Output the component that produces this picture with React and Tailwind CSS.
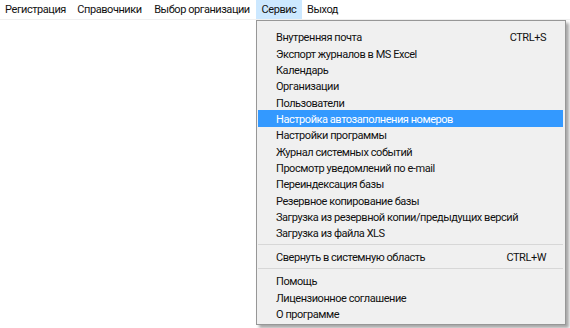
const topMenu = [
  { label: "Регистрация", w: "w-[71px]" },
  { label: "Справочники", w: "w-[77px]" },
  { label: "Выбор организации", w: "w-[108px]" },
  { label: "Сервис", w: "w-[46px]", active: true },
  { label: "Выход", w: "w-[41px]" },
];

// null = разделитель
const serviceItems = [
  { label: "Внутренняя почта", hotkey: "CTRL+S" },
  { label: "Экспорт журналов в MS Excel" },
  { label: "Календарь" },
  { label: "Организации" },
  { label: "Пользователи" },
  { label: "Настройка автозаполнения номеров", selected: true },
  { label: "Настройки программы" },
  { label: "Журнал системных событий" },
  { label: "Просмотр уведомлений по e-mail" },
  { label: "Переиндексация базы" },
  { label: "Резервное копирование базы" },
  { label: "Загрузка из резервной копии/предыдущих версий" },
  { label: "Загрузка из файла XLS" },
  null,
  { label: "Свернуть в системную область", hotkey: "CTRL+W" },
  null,
  { label: "Помощь" },
  { label: "Лицензионное соглашение" },
  { label: "О программе" },
];

export default function App() {
  return (
    <div
      className="relative w-[570px] h-[328px] bg-white overflow-hidden text-[11px] tracking-[-0.45px] text-[#111]"
      style={{ fontFamily: 'Roboto, "Noto Sans", sans-serif' }}
    >
      {/* Главное меню */}
      <div className="flex h-[20px] border-b border-[#f0f0f0]">
        {topMenu.map((m) => (
          <div
            key={m.label}
            className={
              "flex items-center justify-center h-[19px] pt-[2px] whitespace-nowrap " +
              m.w +
              (m.active ? " bg-[#cce8ff]" : "")
            }
          >
            {m.label}
          </div>
        ))}
      </div>

      {/* Выпадающее меню Сервис */}
      <div className="absolute left-[256px] top-[20px] w-[310px] border border-[#979797] bg-[#f0f0f0] pt-[7.83px] pb-[2.17px] shadow-[3px_3px_3px_rgba(0,0,0,0.35)]">
        {serviceItems.map((it, i) =>
          it === null ? (
            <div key={i} className="h-[7.67px] flex items-center ml-[1px] mr-[2px]">
              <div className="w-full h-px bg-[#d7d7d7]" />
            </div>
          ) : (
            <div
              key={i}
              className={
                "h-[16.33px] flex items-center justify-between pt-[2px] pl-[18px] pr-[17px] ml-[1px] mr-[2px] whitespace-nowrap leading-none" +
                (it.selected ? " bg-[#3399ff] text-white" : "")
              }
            >
              <span>{it.label}</span>
              {it.hotkey && <span>{it.hotkey}</span>}
            </div>
          )
        )}
      </div>
    </div>
  );
}
